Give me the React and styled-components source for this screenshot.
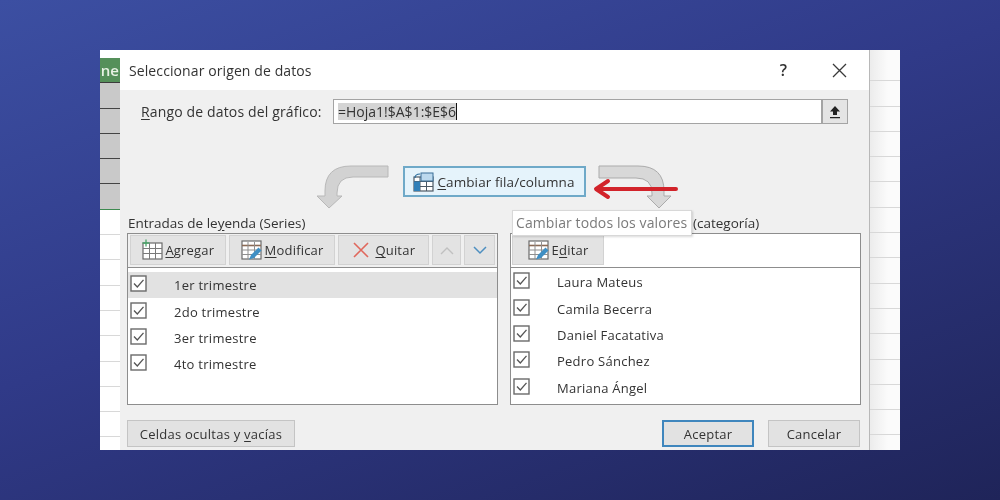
import React from 'react'
import styled, { createGlobalStyle } from 'styled-components'

const Global = createGlobalStyle`
  html, body { margin: 0; padding: 0; }
  body { font-family: 'Open Sans', 'Noto Sans', sans-serif; }
`

const Page = styled.div`
  width: 1000px;
  height: 500px;
  display: flex;
  align-items: center;
  justify-content: center;
  background: linear-gradient(160deg, #3c4fa2 0%, #303a88 45%, #1f2459 100%);
  overflow: hidden;
`

const Shot = styled.div`
  width: 800px;
  height: 400px;
  display: grid;
  grid-template-columns: 20px 749px 31px;
  overflow: hidden;
  background: #fff;
  filter: blur(0.55px);
`

const SheetStrip = styled.div`
  display: flex;
  flex-direction: column;
  padding-top: 8px;
  background: #fff;
`

const SheetCell = styled.div`
  height: 25.3px;
  flex: none;
  box-sizing: border-box;
  border-bottom: 1px solid ${p => p.$line || '#d8d8d8'};
  background: ${p => p.$bg || 'transparent'};
`

const GreenCell = styled(SheetCell)`
  color: #e8f2e4;
  font-size: 15px;
  line-height: 24px;
  font-weight: 600;
  text-align: right;
  padding-right: 1px;
  overflow: hidden;
`

const RightStrip = styled(SheetStrip)`
  padding-top: 6px;
  background: linear-gradient(90deg, #ececec, #fbfbfb 60%);
  border-left: 1px solid #b8b8b8;
`

const Dialog = styled.div`
  display: flex;
  flex-direction: column;
  background: #f0f0f0;
  color: #333;
  font-size: 13px;
`

const TitleBar = styled.div`
  height: 40px;
  flex: none;
  display: flex;
  align-items: center;
  padding: 0 22px 0 9px;
  background: #fff;
`

const Title = styled.div`
  flex: 1;
  font-size: 14px;
  font-weight: 500;
  letter-spacing: 0.1px;
`

const Help = styled.span`
  font-size: 16px;
  font-weight: 600;
  margin-right: 45px;
`

const RangeRow = styled.div`
  display: flex;
  align-items: center;
  height: 25px;
  margin: 9px 21px 0 21px;
`

const RangeLabel = styled.label`
  width: 192px;
  font-size: 14px;
  font-weight: 500;
  letter-spacing: 0.15px;
`

const RangeInput = styled.div`
  flex: 1;
  height: 25px;
  box-sizing: border-box;
  display: flex;
  align-items: center;
  padding-left: 4px;
  background: #fff;
  border: 1px solid #a4a4a4;
  font-size: 14px;
  font-weight: 500;
`

const Selected = styled.span`
  background: #d4d4d4;
  border-right: 1px solid #111;
  line-height: 17px;
`

const PickButton = styled.div`
  width: 26px;
  height: 25px;
  box-sizing: border-box;
  display: flex;
  align-items: center;
  justify-content: center;
  background: #e4e4e4;
  border: 1px solid #a4a4a4;
`

const SwapRow = styled.div`
  position: relative;
  height: 44px;
  margin-top: 41px;
  display: flex;
  justify-content: center;
  padding-right: 1px;
  gap: 12px;
`

const CurveArrow = styled.svg`
  width: 74px;
  height: 44px;
  flex: none;
`

const SwapButton = styled.div`
  width: 183px;
  height: 31px;
  margin-top: 1px;
  box-sizing: border-box;
  display: flex;
  align-items: center;
  justify-content: center;
  gap: 3px;
  background: #e5f3fb;
  border: 2px solid #6fa9c8;
  font-size: 13.5px;
  font-weight: 500;
  letter-spacing: 0.1px;
`

const RedArrow = styled.svg`
  position: absolute;
  left: 472px;
  top: 12px;
  width: 86px;
  height: 24px;
`

const Tooltip = styled.div`
  position: absolute;
  left: 392px;
  top: 45px;
  z-index: 2;
  width: 180px;
  height: 26px;
  box-sizing: border-box;
  background: #fff;
  border: 1px solid #d8d8d8;
  box-shadow: 1px 1px 2px rgba(0, 0, 0, 0.15);
  color: #7b7b7b;
  font-size: 14px;
  font-weight: 500;
  line-height: 24px;
  letter-spacing: 0.1px;
  padding-left: 3px;
  white-space: nowrap;
`

const Columns = styled.div`
  display: grid;
  grid-template-columns: 371px 351px;
  gap: 12px;
  padding-left: 7px;
  margin-top: 4px;
`

const Column = styled.div`
  display: flex;
  flex-direction: column;
`

const SectionTitle = styled.div`
  height: 20px;
  font-size: 13.5px;
  line-height: 20px;
  font-weight: 500;
  padding-left: ${p => p.$indent || 1}px;
`

const Panel = styled.div`
  height: 172px;
  box-sizing: border-box;
  border: 1px solid #8d8d8d;
  background: #fff;
  display: flex;
  flex-direction: column;
`

const Toolbar = styled.div`
  height: 34px;
  flex: none;
  box-sizing: border-box;
  display: flex;
  gap: 3px;
  padding: 1px 2px 0;
  border-bottom: 1px solid #8d8d8d;
  background: ${p => p.$bg || '#f0f0f0'};
`

const ToolButton = styled.div`
  width: ${p => p.$w}px;
  height: 30px;
  box-sizing: border-box;
  display: flex;
  align-items: center;
  justify-content: center;
  gap: 2px;
  margin-left: ${p => p.$ml || 0}px;
  background: #e3e3e3;
  border: 1px solid #d2d2d2;
  font-weight: 500;
  font-size: 13px;
  letter-spacing: 0.2px;
`

const QuitLabel = styled.span`
  margin-left: 3px;
`

const List = styled.div`
  padding-top: ${p => p.$top || 4}px;
`

const Row = styled.div`
  height: 26.4px;
  display: flex;
  align-items: center;
  padding-left: 2px;
  background: ${p => p.$active ? '#e2e2e2' : 'transparent'};
`

const RowName = styled.span`
  margin-left: 27px;
  font-size: 13px;
  font-weight: 500;
  letter-spacing: 0.25px;
`

const Check = styled.svg`
  width: 17px;
  height: 17px;
  flex: none;
  margin-top: -3px;
`

const Footer = styled.div`
  display: flex;
  align-items: center;
  height: 27px;
  margin-top: 15px;
  padding: 0 7px;
`

const FootButton = styled.div`
  height: 27px;
  width: ${p => p.$w}px;
  margin-left: ${p => p.$ml || 0}px;
  box-sizing: border-box;
  display: flex;
  align-items: center;
  justify-content: center;
  background: #e2e2e2;
  border: ${p => p.$primary ? '2px solid #3f86bd' : '1px solid #c4c4c4'};
  font-size: 13px;
  font-weight: 500;
  letter-spacing: 0.25px;
`

const Key = styled.span`
  text-decoration: underline;
  text-underline-offset: 2px;
`

const CheckBox = () => (
  <Check viewBox="0 0 17 17">
    <rect x="1" y="1" width="15" height="15" fill="#fff" stroke="#6a6a6a" strokeWidth="1.4" />
    <path d="M4 8.5 L7.3 12 L13.5 4.8" fill="none" stroke="#555" strokeWidth="1.3" />
  </Check>
)

const TableIcon = () => (
  <svg width="22" height="22" viewBox="0 0 22 22">
    <rect x="2" y="4" width="19" height="16" fill="#fff" stroke="#6b6b6b" strokeWidth="1.2" />
    <path d="M2 9.5h19M2 14.5h19M8.5 4v16M14.5 4v16" stroke="#7a7a7a" strokeWidth="1" />
    <path d="M5 0.5v7M1.5 4h7" stroke="#4aa56a" strokeWidth="1.3" />
  </svg>
)

const EditIcon = () => (
  <svg width="22" height="22" viewBox="0 0 22 22">
    <rect x="1" y="2" width="19" height="18" fill="#fff" stroke="#6b6b6b" strokeWidth="1.2" />
    <path d="M1 6.5h19" stroke="#8a6a55" strokeWidth="1.6" />
    <path d="M1 11h19M1 15.5h19M7 3v17M13.5 3v17" stroke="#8f8f8f" strokeWidth="1" />
    <path d="M8 20.5 L10 16 L17.5 8.5 L20.5 11.5 L13 19 Z" fill="#3f8fc4" />
  </svg>
)

const SwapIcon = () => (
  <svg width="21" height="20" viewBox="0 0 21 20">
    <rect x="1" y="5" width="19" height="14" fill="#fff" stroke="#4d5a66" strokeWidth="1.2" />
    <path d="M1 9.5h19M1 14.5h19M7 5v14M13.5 5v14" stroke="#4d5a66" strokeWidth="1" />
    <rect x="8" y="1" width="12" height="8" fill="#bcd9ee" stroke="#3a6f97" strokeWidth="1" />
    <rect x="1" y="9.5" width="6" height="9.5" fill="#2f7fb8" />
    <path d="M2 6 C2 3 4 2 7 2" fill="none" stroke="#2d6f9e" strokeWidth="1.2" />
  </svg>
)

const sheetRows = Array.from({ length: 15 })
const seriesNames = ['1er trimestre', '2do trimestre', '3er trimestre', '4to trimestre']
const categoryNames = ['Laura Mateus', 'Camila Becerra', 'Daniel Facatativa', 'Pedro Sánchez', 'Mariana Ángel']

export default function App() {
  return (
    <Page>
      <Global />
      <Shot>
        <SheetStrip>
          <GreenCell $bg="#55905a" $line="#3c3c3c">ne</GreenCell>
          {[0, 1, 2, 3, 4].map(i => <SheetCell key={i} $bg="#c9c9c9" $line={i === 4 ? '#3d8a50' : '#444'} />)}
          {sheetRows.slice(0, 9).map((_, i) => <SheetCell key={i} />)}
        </SheetStrip>

        <Dialog>
          <TitleBar>
            <Title>Seleccionar origen de datos</Title>
            <Help>?</Help>
            <svg width="15" height="15" viewBox="0 0 15 15">
              <path d="M1 1 L14 14 M14 1 L1 14" stroke="#3a3a3a" strokeWidth="1.3" />
            </svg>
          </TitleBar>

          <RangeRow>
            <RangeLabel><Key>R</Key>ango de datos del gráfico:</RangeLabel>
            <RangeInput><Selected>=Hoja1!$A$1:$E$6</Selected></RangeInput>
            <PickButton>
              <svg width="14" height="14" viewBox="0 0 14 14">
                <path d="M7 1 L12 6.5 H9 V10 H5 V6.5 H2 Z M2 12 H12 V13.2 H2 Z" fill="#222" />
              </svg>
            </PickButton>
          </RangeRow>

          <SwapRow>
            <CurveArrow viewBox="0 0 74 44">
              <path d="M71 1 V12 H36 Q20 12 20 28 V31 H25 L12 43 L0 31 H8 V26 Q8 1 34 1 Z" fill="#d2d2d2" stroke="#b8b8b8" />
            </CurveArrow>
            <SwapButton>
              <SwapIcon />
              <span><Key>C</Key>ambiar fila/columna</span>
            </SwapButton>
            <CurveArrow viewBox="0 0 74 44">
              <path d="M1 1 V13 H38 Q54 13 54 28 V31 H49 L61 43 L73 31 H66 V26 Q66 1 40 1 Z" fill="#d8d8d8" stroke="#ababab" />
            </CurveArrow>
            <RedArrow viewBox="0 0 86 24">
              <path d="M84 12 H6 M16 4 L4 12 L16 20" fill="none" stroke="#d2232a" strokeWidth="4" strokeLinecap="round" strokeLinejoin="round" />
            </RedArrow>
            <Tooltip>Cambiar todos los valores</Tooltip>
          </SwapRow>

          <Columns>
            <Column>
              <SectionTitle>Entradas de le<Key>y</Key>enda (Series)</SectionTitle>
              <Panel>
                <Toolbar>
                  <ToolButton $w={96}><TableIcon /><span><Key>A</Key>gregar</span></ToolButton>
                  <ToolButton $w={107}><EditIcon /><span><Key>M</Key>odificar</span></ToolButton>
                  <ToolButton $w={91}>
                    <svg width="18" height="18" viewBox="0 0 18 18">
                      <path d="M2 2 L16 16 M16 2 L2 16" stroke="#e0675c" strokeWidth="1.6" />
                    </svg>
                    <QuitLabel><Key>Q</Key>uitar</QuitLabel>
                  </ToolButton>
                  <ToolButton $w={29}>
                    <svg width="14" height="9" viewBox="0 0 14 9"><path d="M1 8 L7 2 L13 8" fill="none" stroke="#c0c0c0" strokeWidth="1.4" /></svg>
                  </ToolButton>
                  <ToolButton $w={31}>
                    <svg width="14" height="9" viewBox="0 0 14 9"><path d="M1 1 L7 7 L13 1" fill="none" stroke="#4d8fc0" strokeWidth="1.5" /></svg>
                  </ToolButton>
                </Toolbar>
                <List>
                  {seriesNames.map((name, i) => (
                    <Row key={name} $active={i === 0}>
                      <CheckBox />
                      <RowName>{name}</RowName>
                    </Row>
                  ))}
                </List>
              </Panel>
            </Column>
            <Column>
              <SectionTitle $indent={183}>(categoría)</SectionTitle>
              <Panel>
                <Toolbar $bg="#fff">
                  <ToolButton $w={92} $ml={-1}><EditIcon /><span>E<Key>d</Key>itar</span></ToolButton>
                </Toolbar>
                <List $top={1}>
                  {categoryNames.map(name => (
                    <Row key={name}>
                      <CheckBox />
                      <RowName>{name}</RowName>
                    </Row>
                  ))}
                </List>
              </Panel>
            </Column>
          </Columns>

          <Footer>
            <FootButton $w={168}><span>Celdas ocultas y <Key>v</Key>acías</span></FootButton>
            <FootButton $w={92} $ml={367} $primary>Aceptar</FootButton>
            <FootButton $w={92} $ml={14}>Cancelar</FootButton>
          </Footer>
        </Dialog>

        <RightStrip>
          {sheetRows.map((_, i) => <SheetCell key={i} />)}
        </RightStrip>
      </Shot>
    </Page>
  )
}
